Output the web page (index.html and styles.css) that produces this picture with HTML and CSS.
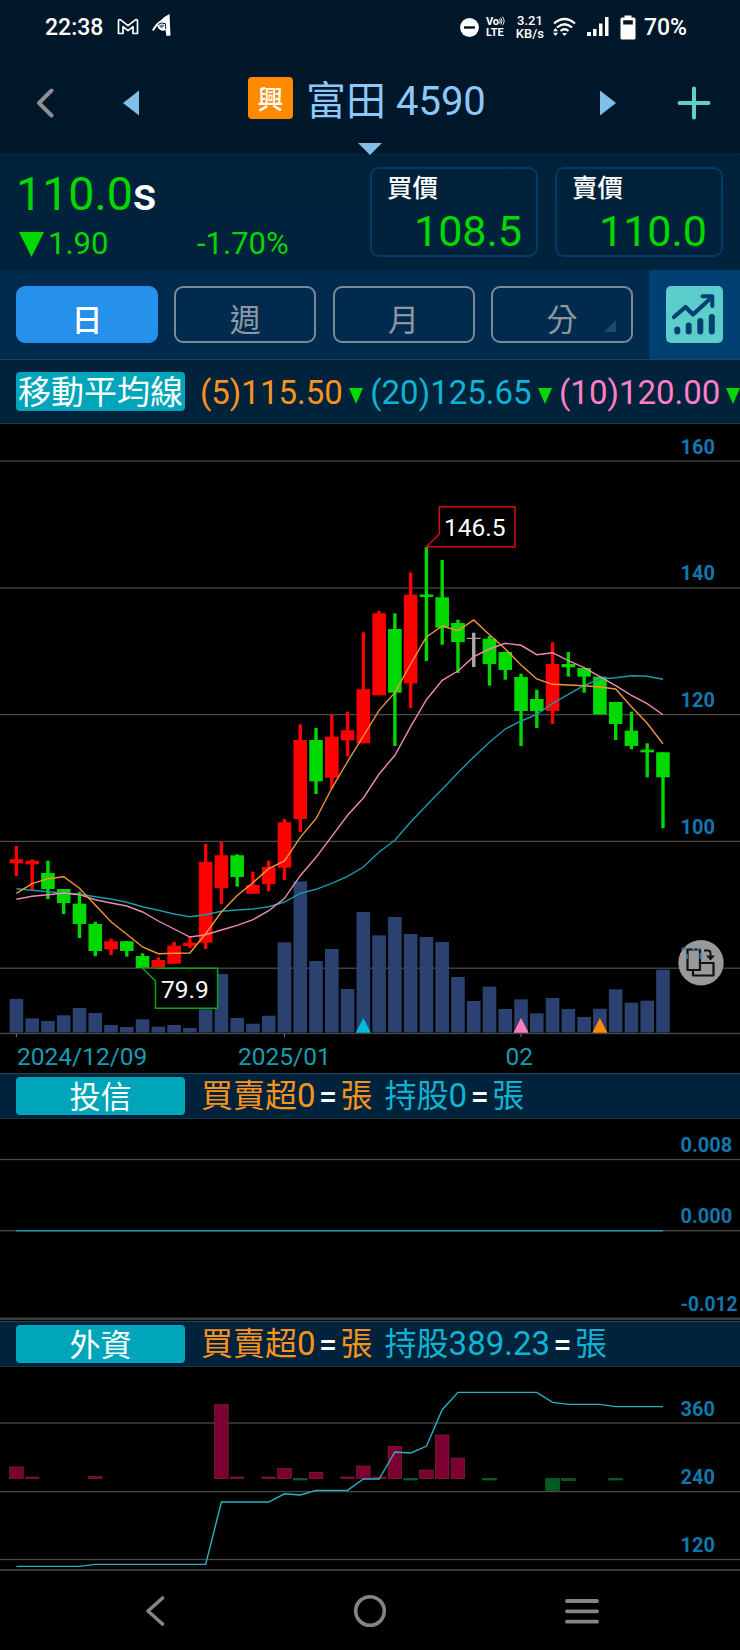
FILE: index.html
```html
<!DOCTYPE html>
<html lang="zh-Hant">
<head>
    <meta charset="UTF-8">
    <meta name="viewport" content="width=device-width, initial-scale=1.0">
    <title>富田 4590</title>
    <link rel="stylesheet" href="styles.css">
</head>
<body>
    <div class="status-bar">
        <span class="clock">22:38</span>
        <svg class="mail-icon" width="22" height="18" viewBox="0 0 22 18"><path d="M1.5 15.5V3.2Q1.5 1 3.6 1.8L11 7.6L18.4 1.8Q20.5 1 20.5 3.2V15.5H16V8.6L11 12.6L6 8.6V15.5Z" fill="none" stroke="#fff" stroke-width="1.7" stroke-linejoin="round"/></svg>
        <svg class="app-icon" width="20" height="24" viewBox="0 0 20 24"><path d="M0 16Q4 9 8.500 6.500Q13 2 17.500 0L18.500 21.500L14.500 22L13.500 16Q9 18 6 14L5.500 11.500L1.500 17Z" fill="#fff"/><path d="M7 12Q9 9.800 12.500 11Q11.500 14.500 8.500 13.800Z" fill="#6f7a83"/><path d="M6 10.500Q9.500 7.800 13.600 9.800V15" fill="none" stroke="#001629" stroke-width="1"/></svg>
        <div class="status-right">
            <svg width="19" height="19" viewBox="0 0 19 19"><circle cx="9.500" cy="9.500" r="9.400" fill="#fff"/><path d="M4 9.500H15" stroke="#001629" stroke-width="2.400"/></svg>
            <div class="volte"><span>Vo<svg width="6" height="10" viewBox="0 0 7 10"><path d="M0.500 2.500Q2.500 5 0.500 8M2 1Q5 5 2 9M4 0Q8 5 4 10" fill="none" stroke="#fff" stroke-width="1.100"/></svg></span><span>LTE</span></div>
            <div class="speed"><span>3.21</span><span>KB/s</span></div>
            <svg class="wifi" width="24" height="20" viewBox="0 0 24 20"><path d="M2 6.500Q12.500 -2.500 23 6.500M5 10.500Q12.500 4 20 10.500M8.500 14Q12.500 10.500 16.500 14" fill="none" stroke="#fff" stroke-width="2.200"/><path d="M10 16H15L12.500 19Z" fill="#fff"/><path d="M1 14.300L3.500 11L6 14.300ZM1 15.700L3.500 19L6 15.700Z" fill="#fff"/></svg>
            <svg class="signal" width="22" height="20" viewBox="0 0 22 20"><path d="M0 15H4V19H0ZM6 12H9.500V19H6ZM12 6.500H15.500V19H12ZM18 0H21.500V19H18Z" fill="#fff"/></svg>
            <svg class="battery" width="16" height="25" viewBox="0 0 16 25"><path d="M4.500 0.500H11.500V2.500H14Q15.500 2.500 15.500 4V23Q15.500 24.500 14 24.500H2Q0.500 24.500 0.500 23V4Q0.500 2.500 2 2.500H4.500ZM3.200 5.200V9.500H12.800V5.200Z" fill="#fff" fill-rule="evenodd"/></svg>
            <span class="percent">70%</span>
        </div>
    </div>

    <header class="header">
        <svg class="back" width="18" height="30" viewBox="0 0 18 30"><path d="M15.500 2.500L3 15L15.500 27.500" fill="none" stroke="#8c8f91" stroke-width="4" stroke-linecap="round" stroke-linejoin="round"/></svg>
        <svg class="prev" width="16" height="26" viewBox="0 0 16 26"><path d="M16 0.500V25.500L0 13Z" fill="#7fbfe8"/></svg>
        <span class="badge">興</span>
        <h1 class="title">富田 4590</h1>
        <svg class="next" width="16" height="26" viewBox="0 0 16 26"><path d="M0 0.500V25.500L16 13Z" fill="#7fbfe8"/></svg>
        <svg class="plus" width="34" height="34" viewBox="0 0 34 34"><path d="M2.500 17H31.500M17 2.500V31.500" stroke="#5fd0c6" stroke-width="4" stroke-linecap="round"/></svg>
        <svg class="drop" width="24" height="12" viewBox="0 0 24 12"><path d="M0 0H24L12 12Z" fill="#7fbfe8"/></svg>
    </header>

    <section class="quote">
        <div class="last">
            <div class="price">110.0<span class="mark">s</span></div>
            <div class="change">
                <svg width="25" height="25" viewBox="0 0 25 25"><path d="M0 0H25L12.500 25Z" fill="#00d800"/></svg>
                <span class="diff">1.90</span>
                <span>-1.70%</span>
            </div>
        </div>
        <div class="box">
            <span class="box-label">買價</span>
            <span class="box-value">108.5</span>
        </div>
        <div class="box">
            <span class="box-label">賣價</span>
            <span class="box-value">110.0</span>
        </div>
    </section>

    <nav class="tabs">
        <button class="tab selected">日</button>
        <button class="tab">週</button>
        <button class="tab">月</button>
        <button class="tab more">分</button>
        <div class="chart-toggle">
            <svg width="57" height="57" viewBox="0 0 57 57">
                <rect width="57" height="57" rx="5" fill="#5bcdcb"/>
                <path d="M8 31L19.500 21L27 28.500L45 12" fill="none" stroke="#00416f" stroke-width="4.200" stroke-linecap="round" stroke-linejoin="round"/>
                <path d="M36.500 10.200H46.300V20" fill="none" stroke="#00416f" stroke-width="4" stroke-linecap="round" stroke-linejoin="round"/>
                <path d="M11.300 43.500V45.500M22.700 39.500V45.500M34.300 35V45.500M45.800 31V45.500" stroke="#00416f" stroke-width="6" stroke-linecap="round"/>
            </svg>
        </div>
    </nav>

    <div class="ma-row">
        <span class="tag ma-tag">移動平均線</span>
        <span class="ma orange">(5)115.50</span><i class="down"></i>
        <span class="ma cyan">(20)125.65</span><i class="down"></i>
        <span class="ma pink">(10)120.00</span><i class="down"></i>
    </div>

    <svg id="priceChart" class="chart" width="740" height="649" viewBox="0 424 740 649"></svg>

    <div class="indicator">
        <span class="tag">投信</span>
        <span class="orange">買賣超<b>0</b></span><span class="eq">=</span><span class="orange unit">張</span>
        <span class="cyan">持股<b>0</b></span><span class="eq">=</span><span class="cyan">張</span>
    </div>
    <svg id="trustChart" class="chart" width="740" height="202" viewBox="0 1119 740 202"></svg>

    <div class="indicator">
        <span class="tag">外資</span>
        <span class="orange">買賣超<b>0</b></span><span class="eq">=</span><span class="orange unit">張</span>
        <span class="cyan">持股<b>389.23</b></span><span class="eq">=</span><span class="cyan">張</span>
    </div>
    <svg id="foreignChart" class="chart" width="740" height="205" viewBox="0 1367 740 205"></svg>

    <footer class="nav-bar">
        <svg width="20" height="30" viewBox="0 0 20 30"><path d="M17.500 2L3 15L17.500 28" fill="none" stroke="#858585" stroke-width="3.600" stroke-linecap="round" stroke-linejoin="round"/></svg>
        <svg class="home" width="34" height="34" viewBox="0 0 34 34"><circle cx="17" cy="17" r="14.300" fill="none" stroke="#858585" stroke-width="3.600"/></svg>
        <svg width="34" height="28" viewBox="0 0 34 28"><path d="M2 4H32M2 14.300H32M2 24.700H32" stroke="#858585" stroke-width="3.800" stroke-linecap="round"/></svg>
    </footer>

    <script src="chart.js"></script>
</body>
</html>
```
FILE: styles.css
```css
* {
    box-sizing: border-box;
}
body {
    margin: 0;
    width: 740px;
    height: 1650px;
    overflow: hidden;
    background-color: #000;
    color: white;
    font-family: Roboto, "Noto Sans CJK TC", sans-serif;
}
svg {
    display: block;
    flex: none;
}
.status-bar {
    display: flex;
    align-items: center;
    height: 54px;
    padding: 0 53px 0 45px;
    background-color: #001629;
    font-size: 23px;
    font-weight: 500;
}
.clock {
    width: 72px;
}
.mail-icon {
    margin-right: 13px;
}
.app-icon {
    margin-top: -2px;
}
.status-right {
    display: flex;
    align-items: center;
    margin-left: auto;
}
.volte, .speed {
    display: flex;
    flex-direction: column;
    white-space: nowrap;
}
.volte {
    width: 23px;
    margin-left: 7px;
    font-size: 11px;
    line-height: 11px;
    font-weight: 700;
}
.volte span {
    display: flex;
}
.speed {
    align-items: center;
    width: 28px;
    margin-left: 7px;
    font-size: 13px;
    line-height: 13.5px;
}
.wifi {
    margin-left: 8px;
}
.signal {
    margin-left: 11px;
}
.battery {
    margin: 0 8px 0 11px;
}
.header {
    position: relative;
    display: flex;
    align-items: center;
    height: 101px;
    padding: 0 29px 1px 36px;
    background-color: #001629;
    border-bottom: 2px solid #00233f;
}
.prev {
    margin-left: 69px;
}
.badge {
    width: 45px;
    height: 42px;
    margin: 0 13px 11px 109px;
    padding-top: 5px;
    border-radius: 4px;
    background-color: #ff8a00;
    font-size: 26px;
    line-height: 36px;
    font-weight: 500;
    text-align: center;
}
.title {
    width: 181px;
    margin: 0 0 3px;
    color: #8cc8fa;
    font-size: 40px;
    line-height: 50px;
    font-weight: 400;
    white-space: nowrap;
}
.next {
    margin-left: 113px;
}
.plus {
    margin-left: auto;
}
.drop {
    position: absolute;
    left: 358px;
    top: 89px;
}
.quote {
    display: flex;
    height: 115px;
    padding: 12px 17px 13px 16px;
    background: linear-gradient(#00213a, #00233d);
}
.last {
    width: 355px;
    color: #00d800;
}
.price {
    height: 53px;
    font-size: 46.5px;
    line-height: 54px;
}
.mark {
    color: white;
    font-weight: 500;
}
.change {
    display: flex;
    align-items: center;
    height: 48px;
    padding-left: 3px;
    font-size: 31px;
    line-height: 48px;
}
.diff {
    width: 149px;
    margin-left: 4px;
}
.box {
    display: flex;
    flex-direction: column;
    width: 168px;
    height: 90px;
    margin-right: 17px;
    padding: 5px 14px 0 15px;
    flex: none;
    border: 2px solid #003b63;
    border-radius: 9px;
}
.box:last-child {
    margin-right: 0;
}
.box-label {
    font-size: 25.5px;
    line-height: 28px;
    font-weight: 500;
}
.box-value {
    color: #00d800;
    font-size: 43px;
    line-height: 59px;
    text-align: right;
}
.tabs {
    display: flex;
    align-items: center;
    gap: 16.3px;
    height: 90px;
    padding-left: 16px;
    background-color: #002b4f;
    border-bottom: 1px solid #24425a;
}
.tab {
    width: 142px;
    height: 57px;
    padding: 12px 0 0;
    border: 2px solid #7d8a96;
    border-radius: 9px;
    background: none;
    color: #8e979f;
    font-family: inherit;
    font-size: 31px;
    line-height: 36px;
}
.selected {
    background-color: #2691ea;
    border-color: #2691ea;
    color: white;
    font-weight: 500;
}
.more {
    position: relative;
}
.more::after {
    content: "";
    position: absolute;
    right: 15px;
    bottom: 9px;
    border-left: 12px solid transparent;
    border-bottom: 12px solid #1f4872;
}
.chart-toggle {
    align-self: stretch;
    display: flex;
    align-items: center;
    flex: 1;
    padding-left: 17px;
    background-color: #003f71;
}
.ma-row {
    display: flex;
    align-items: center;
    height: 64px;
    padding-left: 16px;
    overflow: hidden;
    background-color: #00223b;
    border-bottom: 1px solid #24364a;
    white-space: nowrap;
    font-size: 33px;
}
.ma {
    padding-top: 2px;
}
.tag {
    width: 169px;
    height: 38px;
    flex: none;
    border-radius: 4px;
    background-color: #00a5ba;
    color: white;
    font-size: 31px;
    line-height: 41px;
    text-align: center;
}
.ma-tag {
    height: 39px;
    margin-right: 15px;
    font-size: 33px;
    line-height: 41px;
}
.down {
    flex: none;
    margin: 0 7.500px 0 6px;
    border-left: 7.5px solid transparent;
    border-right: 7.5px solid transparent;
    border-top: 16px solid #00d800;
    transform: translateY(4px);
}
.orange {
    color: #f7931e;
}
.cyan {
    color: #10b4d2;
}
.pink {
    color: #ff7fc4;
}
.chart {
    background-color: #000;
    font-family: Roboto, sans-serif;
}
.indicator {
    display: flex;
    align-items: center;
    height: 46px;
    padding: 0 0 1px 16px;
    background-color: #00223b;
    border-top: 1px solid #24475f;
    border-bottom: 1px solid #1b3045;
    font-size: 32px;
    line-height: 42px;
    white-space: nowrap;
}
.indicator .tag {
    margin-right: 16px;
    line-height: 41px;
}
.indicator b {
    font-size: 33px;
    font-weight: 400;
}
.eq {
    width: 25px;
    color: white;
    font-size: 32px;
    font-weight: 500;
    text-align: center;
}
.unit {
    margin-right: 12px;
}
.nav-bar {
    display: flex;
    justify-content: space-between;
    align-items: center;
    height: 78px;
    padding: 0 141px 0 145px;
}
.home {
    margin-left: 9px;
}
.axis {
    fill: #1177ad;
    font-size: 20px;
    font-weight: 700;
}
.date {
    fill: #179bb0;
    font-size: 24.5px;
}
.callout {
    fill: #fff;
    font-size: 24.5px;
}
```
FILE: chart.js
```js
const GREEN = '#00d800', RED = '#ff0000', GRAY = '#a8a8a8';
const STEP = 15.77;
const cx = i => 16.4 + i * STEP;

// high, body top, body bottom, low, colour
const candles = [
    [846, 859.3, 863.3, 876, RED], [859.3, 860.7, 864.3, 890.7, RED], [860.7, 873, 889, 899, GREEN],
    [889, 889, 903, 914, GREEN], [891.7, 903.7, 924, 938, GREEN], [921.7, 924, 951, 956.3, GREEN],
    [938.7, 941.3, 949.3, 955, RED], [941, 941.3, 951, 956.7, GREEN], [953.3, 956, 968, 968, GREEN],
    [957.3, 960, 967.5, 967.5, RED], [942, 945.7, 963.7, 963.7, RED], [936.7, 942.7, 946, 948, RED],
    [844, 862, 942.7, 949, RED], [842, 855.3, 888, 904, RED], [854.3, 855.3, 877, 886.7, GREEN],
    [871.7, 885, 893.7, 893.7, RED], [860.7, 867, 884, 891.3, RED], [819, 822.3, 867.7, 880, RED],
    [724.3, 740, 819, 832, RED], [728, 740, 781.3, 794, GREEN], [714.7, 736.7, 777.7, 788.3, RED],
    [711.7, 730.3, 740.3, 756, RED], [632.3, 689.3, 743.3, 743.3, RED], [611, 613.3, 695.3, 695.3, RED],
    [613.3, 629, 692.7, 746, GREEN], [572.5, 594.7, 683.3, 708, RED], [547, 594.5, 597, 661, GREEN],
    [560, 597.3, 627.7, 644.7, GREEN], [619.7, 623, 642, 673, GREEN], [632.7, 637.8, 639, 667, GRAY],
    [636, 638.7, 664, 685.7, GREEN], [651.7, 652, 670, 679.7, GREEN], [673.7, 677, 711, 746, GREEN],
    [689.7, 699, 711, 728, GREEN], [642.3, 664, 711, 724, RED], [652, 664, 667.3, 676.7, GREEN],
    [668, 668, 676.7, 692.7, GREEN], [676.7, 676.7, 714.3, 714.3, GREEN], [702, 702, 724, 740, GREEN],
    [711.7, 730.7, 746, 749.3, GREEN], [743.3, 749.7, 752.3, 777.3, GREEN], [752.3, 752.3, 777.3, 828.3, GREEN]
];
const volume = [
    999, 1018.3, 1021, 1015.3, 1008, 1013, 1025, 1027, 1019.3, 1026.7, 1025, 1028, 1009.3, 974,
    1018, 1023.7, 1015.7, 942.3, 881.3, 961, 949, 989, 912, 935.3, 917, 934, 937, 942,
    977, 1001, 986.7, 1009, 999.3, 1013.3, 998, 1009, 1017, 1008.7, 989.3, 1002.7, 1000.7, 969.7
];
const ma5 = [
    893.3, 883.7, 878.7, 876.7, 888.3, 905, 921.7, 934.3, 947, 953.7, 953.3, 953, 933.7, 912,
    895.5, 882.7, 868.7, 861, 837.3, 818.7, 788.3, 761.7, 736, 710.3, 692.7, 664, 637, 626,
    630.7, 620, 634.7, 649, 665, 679, 684.3, 685, 685.7, 687, 689, 706.7, 723.3, 743.7
];
const ma10 = [
    899.3, 896.3, 894.7, 893, 894.7, 899.7, 903, 906, 912, 921, 929, 937, 934.7, 930,
    925.3, 919.7, 910.7, 898.3, 875.7, 857.3, 836.3, 815.3, 798, 774, 755.3, 726.7, 699.7, 680.3,
    671, 656.7, 649, 643.3, 645.3, 654.7, 652.7, 660.7, 667.7, 676.7, 685.7, 695.3, 703.7, 714.7
];
const ma20 = [
    888.7, 890.3, 891.7, 893, 894.3, 896.7, 899, 902.3, 906.7, 910.3, 914, 916.7, 914.7, 911.3,
    910, 909, 906.7, 902, 893.3, 889.3, 883.3, 876.3, 867, 852, 840.3, 822, 805.5, 789.3,
    772.7, 757, 742.3, 729, 721, 714.3, 703.3, 694.3, 685.3, 679.3, 677.7, 675.7, 676.3, 679.3
];

function grid(y, color = '#4a4a4a', h = 1.3) {
    return `<rect x="0" y="${y - h / 2}" width="740" height="${h}" fill="${color}"/>`;
}
function bar(i, top, bottom, fill, extra = '') {
    return `<rect x="${cx(i) - 6.8}" y="${top}" width="13.6" height="${bottom - top}" fill="${fill}" ${extra}/>`;
}
function line(points, color) {
    return `<polyline points="${points.map((y, i) => cx(i) + ',' + y).join(' ')}" fill="none" stroke="${color}" stroke-width="1.4"/>`;
}
function label(text, y, cls = 'axis', x = 680.5) {
    return `<text class="${cls}" x="${x}" y="${y}">${text}</text>`;
}
function marker(i, color) {
    return `<path d="M${cx(i) - 7.6} 1032.8L${cx(i)} 1018L${cx(i) + 7.6} 1032.8Z" fill="${color}"/>`;
}

// Daily candles with volume
function drawPrice() {
    let s = [461, 588, 714.6, 841.4, 968.2].map(y => grid(y)).join('');
    s += label(160, 453.5) + label(140, 580.3) + label(120, 707) + label(100, 834);
    volume.forEach((top, i) => s += bar(i, top, 1032.5, '#2e4679', 'fill-opacity="0.93"'));
    s += grid(1033.5);
    [0, 17, 32].forEach(i => s += `<rect x="${cx(i) - 0.5}" y="1034" width="1" height="3" fill="#777"/>`);
    candles.forEach(([high, top, bottom, low, color], i) => {
        s += bar(i, top, bottom, color);
        s += `<rect x="${cx(i) - 1.7}" y="${high}" width="3.4" height="${low - high}" fill="${color}"/>`;
    });
    s += line(ma20, '#189bb0') + line(ma10, '#f08ab2') + line(ma5, '#f0963a');
    s += marker(22, '#00bcd8') + marker(32, '#ff7dbb') + marker(37, '#ff8a0a');
    s += '<path d="M426.500 546.700L439.300 534V506.700H515V546.700Z" fill="#000" stroke="#d80d14" stroke-width="1.500"/>';
    s += label('146.5', 536.3, 'callout', 444);
    s += '<path d="M142.600 968.300H217.600V1008.300H155.500V981Z" fill="#000" stroke="#0da516" stroke-width="1.500"/>';
    s += '<path d="M143 968.300H155" stroke="#4a4a4a" stroke-width="1.500"/>';
    s += label('79.9', 997.7, 'callout', 161);
    s += label('2024/12/09', 1065, 'date', 17) + label('2025/01', 1065, 'date', 238) + label('02', 1065, 'date', 505.5);
    // rotate screen button
    s += '<circle cx="701" cy="962.700" r="22.700" fill="#999"/>';
    s += '<path d="M687.500 949.500H700V970H687.500ZM700 963H713.500V975.500H693V970" fill="none" stroke="#111" stroke-width="2.200" stroke-linejoin="round"/>';
    s += '<path d="M704 950.500H708Q710.500 950.500 710.500 953V957" fill="none" stroke="#111" stroke-width="2"/><path d="M706 955.500H715L710.500 960.500Z" fill="#111"/>';
    s += '<path d="M682.500 950V948.500H686M692 949H695M697 949H700M687 954V959M700.500 953V959" fill="none" stroke="#277faf" stroke-width="1.800"/>';
    document.getElementById('priceChart').innerHTML = s;
}

function drawTrust() {
    document.getElementById('trustChart').innerHTML =
        grid(1159.5) + grid(1230.7) + grid(1318.8, '#3d3d3d', 2.6) +
        line(new Array(42).fill(1230.7), '#149aaf') +
        label('0.008', 1152) + label('0.000', 1223.2) +
        '<text class="axis" x="680.500" y="1310.700" textLength="57" lengthAdjust="spacingAndGlyphs">-0.012</text>';
}

function drawForeign() {
    const base = 1478.6;
    const tops = {
        0: 1467, 1: 1477, 5: 1476.5, 13: 1404.7, 14: 1477, 16: 1477, 17: 1468.3, 19: 1472.3, 21: 1477,
        22: 1466, 23: 1477, 24: 1446.3, 26: 1470, 27: 1435, 28: 1458,
        18: 1480, 25: 1480, 30: 1480, 34: 1490.3, 35: 1480.6, 38: 1480
    };
    const held = [
        ...new Array(5).fill(1566.4), ...new Array(8).fill(1564.4), 1502, 1502, 1502, 1502, 1493.8, 1495,
        1490.4, 1490.4, 1490.4, 1479, 1479, 1452, 1453, 1446.3, 1409.7,
        ...new Array(6).fill(1392.4), 1402.4, 1404.4, 1404.4, 1404.4, 1406.6, 1406.6, 1406.6, 1406.6
    ];
    let s = [1423, 1491.6, 1559.5].map(y => grid(y)).join('') + grid(1570, '#4a4a4a', 1.6);
    for (const [i, y] of Object.entries(tops)) {
        s += y < base
            ? bar(+i, y, base, '#840035', 'fill-opacity="0.93" stroke="#842548" stroke-width="0.6"')
            : bar(+i, base, y, '#005c20', 'stroke="#11703a" stroke-width="0.6"');
    }
    s += line(held, '#2bb0c4');
    s += label(360, 1415.5) + label(240, 1484) + label(120, 1552);
    document.getElementById('foreignChart').innerHTML = s;
}

drawPrice();
drawTrust();
drawForeign();
```
